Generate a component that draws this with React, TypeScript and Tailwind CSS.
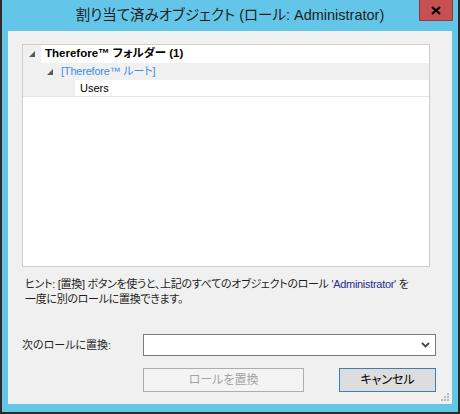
import React from 'react';

const font = {
  fontFamily: '"Liberation Sans", "Noto Sans CJK JP", sans-serif',
  fontFeatureSettings: '"palt"',
};

// small filled corner triangle used by the tree's expanded nodes
const ExpandedGlyph = () => (
  <svg width="6" height="6" viewBox="0 0 6 6" className="shrink-0">
    <polygon points="6,0 6,6 0,6" fill="#595959" />
  </svg>
);

const SizeGrip = () => (
  <svg width="9" height="9" viewBox="0 0 9 9">
    {[
      [7, 1],
      [4, 4],
      [7, 4],
      [1, 7],
      [4, 7],
      [7, 7],
    ].map(([x, y], i) => (
      <rect key={i} x={x} y={y} width="2" height="2" fill="#b9b9b9" />
    ))}
  </svg>
);

const App = () => {
  return (
    <div className="w-[460px] h-[414px] bg-[#2b2b2b] overflow-hidden" style={font}>
      {/* Window frame */}
      <div className="mx-[2px] h-[412px] bg-[#63c6e9] flex flex-col px-[6px]">
        {/* Title bar */}
        <div className="relative h-[31px] flex items-center justify-center">
          <span className="text-[14.5px] text-[#1e1e1e] leading-none pb-[1px]">
            割り当て済みオブジェクト (ロール: Administrator)
          </span>
          <button className="absolute top-0 right-[-1px] w-[34px] h-[21px] bg-[#c75050] border border-[#8e3b3b] border-t-0 flex items-center justify-center">
            <svg width="10" height="9" viewBox="0 0 10 9">
              <path d="M1 1 L9 8 M9 1 L1 8" stroke="#000" strokeWidth="2.2" />
            </svg>
          </button>
        </div>

        {/* Dialog body */}
        <div className="h-[373px] bg-[#f0f0f0] flex flex-col pl-[14px] pr-[22px] pt-[13px] text-[11px]">
          {/* Tree view */}
          <div className="h-[223px] bg-white border border-[#cfcfcf] flex flex-col">
            <div className="flex h-[18px]">
              <div className="w-[18px] bg-[#f0f0f0] flex items-center justify-end pr-[6px]">
                <ExpandedGlyph />
              </div>
              <div className="flex-1 flex items-center pl-[4px] text-[11.5px] font-bold text-black">
                Therefore™ フォルダー (1)
              </div>
            </div>
            <div className="flex h-[17px] bg-[#f0f0f0] items-center pl-[24px]">
              <ExpandedGlyph />
              <span className="pl-[8px] text-[11px] tracking-[-0.2px] text-[#3b8fe0]">[Therefore™ ルート]</span>
            </div>
            <div className="flex h-[17px] border-b border-[#e6e6e6]">
              <div className="w-[52px] bg-[#f0f0f0]" />
              <div className="flex-1 flex items-center pl-[5px] text-black">Users</div>
            </div>
          </div>

          {/* Hint */}
          <p className="mt-[10px] ml-[3px] leading-[15px] tracking-[-0.3px] text-[#1e1e1e] whitespace-nowrap">
            ヒント: [置換] ボタンを使うと、上記のすべてのオブジェクトのロール{' '}
            <span className="text-[#1f2f8a]">'Administrator'</span> を
            <br />
            一度に別のロールに置換できます。
          </p>

          {/* Replace-with row */}
          <div className="mt-[27px] flex items-center">
            <span className="w-[120px] text-[#1e1e1e]">次のロールに置換:</span>
            <div className="h-[22px] w-[293px] ml-auto mr-[-6px] bg-white border border-[#7a7a7a] flex items-center justify-end pr-[5px]">
              <svg width="9" height="6" viewBox="0 0 9 6">
                <path d="M1 1 L4.5 4.5 L8 1" fill="none" stroke="#444" strokeWidth="1.8" />
              </svg>
            </div>
          </div>

          {/* Buttons */}
          <div className="mt-[12px] flex mr-[-6px] ml-auto w-[293px] justify-between">
            <button
              disabled
              className="w-[161px] h-[24px] bg-[#f4f4f4] border border-[#adadad] text-[12px] text-[#a3a3a3]"
            >
              ロールを置換
            </button>
            <button className="w-[97px] h-[24px] bg-[#dddddd] border border-[#3c7fb1] text-[12px] text-black">
              キャンセル
            </button>
          </div>

          <div className="mt-auto mb-[3px] mr-[-19px] flex justify-end">
            <SizeGrip />
          </div>
        </div>
      </div>
    </div>
  );
};

export default App;
